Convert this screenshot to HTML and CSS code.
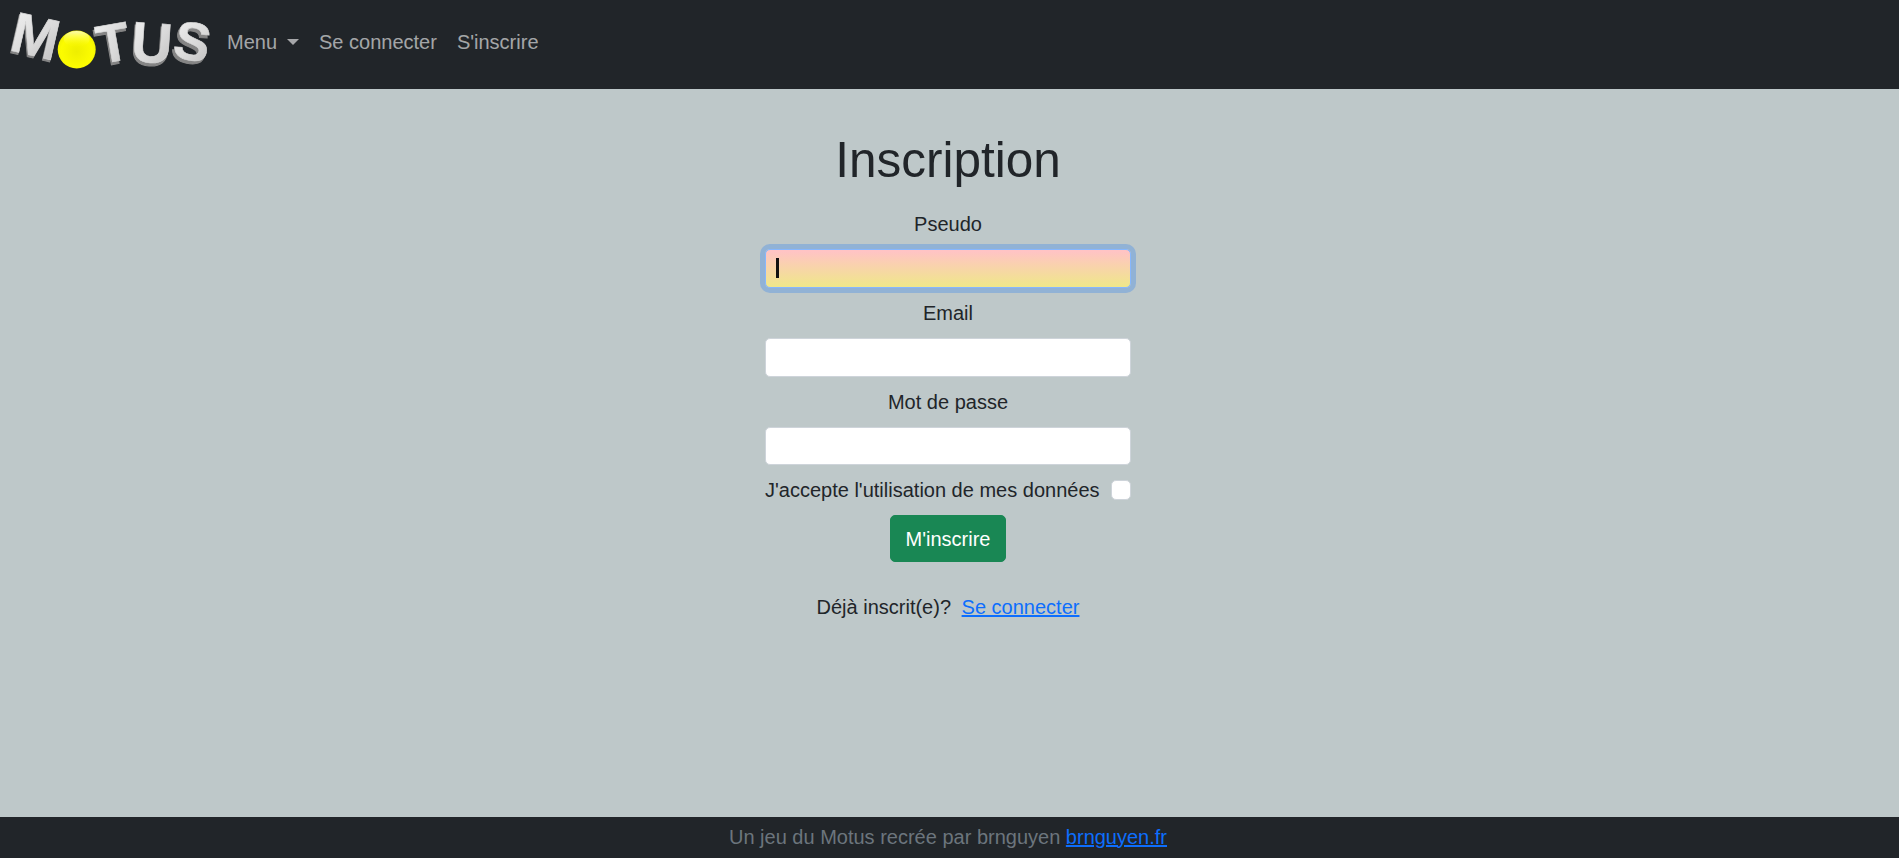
FILE: index.html
```html
<!DOCTYPE html>
<html lang="fr">
<head>
<meta charset="utf-8">
<title>Motus - Inscription</title>
<link rel="stylesheet" href="styles.css">
</head>
<body>
<nav class="navbar">
  <a class="brand" href="#" aria-label="Motus">
    <svg class="logo" width="207" height="88" viewBox="0 0 207 88">
      <defs>
        <linearGradient id="metal" x1="0" y1="0" x2="1" y2="1">
          <stop offset="0" stop-color="#f2f2f2"/>
          <stop offset="0.55" stop-color="#dadada"/>
          <stop offset="1" stop-color="#bcbcbc"/>
        </linearGradient>
        <radialGradient id="ball" cx="0.5" cy="0.55" r="0.55">
          <stop offset="0" stop-color="#eeee00"/>
          <stop offset="0.75" stop-color="#fcfc00"/>
          <stop offset="1" stop-color="#f0f000"/>
        </radialGradient>
        <linearGradient id="shine" x1="0" y1="0" x2="0" y2="1">
          <stop offset="0" stop-color="#ffffff" stop-opacity="0.7"/>
          <stop offset="1" stop-color="#ffff00" stop-opacity="0"/>
        </linearGradient>
      </defs>
      <g class="logo-text">
        <text class="depth" transform="translate(7 52) rotate(13)">M</text>
        <text class="face" transform="translate(8 50) rotate(13)">M</text>
        <text class="depth letter-small" transform="translate(99 67) rotate(-10)">T</text>
        <text class="face letter-small" transform="translate(100 64) rotate(-10)">T</text>
        <text class="depth" transform="translate(129 64) rotate(4)">U</text>
        <text class="face" transform="translate(130 61) rotate(4)">U</text>
        <text class="depth letter-small" transform="translate(169 59) rotate(12)">S</text>
        <text class="face letter-small" transform="translate(171 56) rotate(12)">S</text>
      </g>
      <circle cx="76.7" cy="49.5" r="19" fill="url(#ball)"/>
      <ellipse cx="76.7" cy="39" rx="13" ry="8" fill="url(#shine)"/>
    </svg>
  </a>
  <ul class="nav-links">
    <li><a class="nav-link" href="#">Menu<span class="caret"></span></a></li>
    <li><a class="nav-link" href="#">Se connecter</a></li>
    <li><a class="nav-link" href="#">S'inscrire</a></li>
  </ul>
</nav>

<main class="content">
  <h1 class="title">Inscription</h1>
  <form class="signup">
    <label class="field-label" for="pseudo">Pseudo</label>
    <div class="field">
      <input class="field-input field-input-focus" id="pseudo" type="text">
      <span class="text-caret"></span>
    </div>
    <label class="field-label" for="email">Email</label>
    <div class="field"><input class="field-input" id="email" type="email"></div>
    <label class="field-label" for="pass">Mot de passe</label>
    <div class="field"><input class="field-input" id="pass" type="password"></div>
    <div class="consent">
      <label for="rgpd">J'accepte l'utilisation de mes données</label>
      <input class="check" id="rgpd" type="checkbox">
    </div>
    <button class="submit" type="button">M'inscrire</button>
  </form>
  <p class="already">Déjà inscrit(e)? <a class="already-link" href="#">Se connecter</a></p>
</main>

<footer class="footer">
  <span>Un jeu du Motus recrée par brnguyen <a href="#">brnguyen.fr</a></span>
</footer>
</body>
</html>
```
FILE: styles.css
```css
* { box-sizing: border-box; }

html, body { height: 100%; }

body {
  margin: 0;
  min-height: 858px;
  display: flex;
  flex-direction: column;
  background: #bec8c9;
  color: #212529;
  font-family: "Liberation Sans", Arial, sans-serif;
  font-size: 20px;
  line-height: 30px;
}

.navbar {
  flex: none;
  height: 88.5px;
  display: flex;
  align-items: center;
  gap: 10px;
  background: #212529;
}

.brand { display: block; line-height: 0; }

.logo { overflow: visible; }

.logo-text text {
  font-family: "Liberation Sans", Arial, sans-serif;
  font-weight: 700;
  font-size: 57px;
}
.logo-text .letter-small { font-size: 54px; }
.logo-text .depth { fill: #858585; stroke: #858585; stroke-width: 1px; }
.logo-text .face { fill: url(#metal); stroke: #d8d8d8; stroke-width: 0.6px; }

.nav-links {
  display: flex;
  list-style: none;
  margin: 0 0 5px;
  padding: 0;
}

.nav-link {
  display: block;
  padding: 10px;
  color: rgba(255, 255, 255, 0.6);
  text-decoration: none;
}

.caret {
  display: inline-block;
  margin-left: 10px;
  vertical-align: 4px;
  border-top: 6px solid currentColor;
  border-left: 6px solid transparent;
  border-right: 6px solid transparent;
}

.content {
  flex: 1;
  display: flex;
  flex-direction: column;
  align-items: center;
  padding: 41px 3px 0 0;
}

.title {
  margin: 0 0 19.5px;
  font-size: 49.5px;
  font-weight: 500;
  line-height: 60px;
  text-align: center;
}

.signup {
  width: 366px;
  display: flex;
  flex-direction: column;
  align-items: center;
}

.field-label {
  display: block;
  margin-bottom: 10px;
  text-align: center;
}

.field {
  position: relative;
  width: 100%;
  margin-bottom: 10px;
}

.field-input {
  display: block;
  width: 100%;
  height: 38.75px;
  padding: 0 15px;
  border: 1px solid #ced4da;
  border-radius: 5px;
  background: #fff;
  font: inherit;
  outline: none;
}

.field-input-focus {
  border-color: #86b7fe;
  box-shadow: 0 0 0 5px rgba(13, 110, 253, 0.25);
  background: linear-gradient(#ffc4c4 5%, #f0e68c 95%);
}

.text-caret {
  position: absolute;
  left: 11px;
  top: 9px;
  width: 2.5px;
  height: 20px;
  background: #111;
}

.consent {
  width: 100%;
  height: 30px;
  margin-bottom: 9.5px;
  display: flex;
  align-items: center;
  justify-content: space-between;
}

.check {
  appearance: none;
  width: 20px;
  height: 20px;
  margin: 0;
  border: 1px solid #ced4da;
  border-radius: 5px;
  background: #fff;
}

.submit {
  height: 47.5px;
  padding: 0 15px;
  border: 1px solid #198754;
  border-radius: 5px;
  background: #198754;
  color: #fff;
  font: inherit;
}

.already {
  margin: 29.5px 0 0;
  text-align: center;
}

.already-link {
  margin-left: 5px;
  color: #0d6efd;
}

.footer {
  flex: none;
  height: 41px;
  padding-right: 3px;
  background: #212529;
  color: #6c757d;
  line-height: 41px;
  text-align: center;
}

.footer a { color: #0d6efd; }
```
